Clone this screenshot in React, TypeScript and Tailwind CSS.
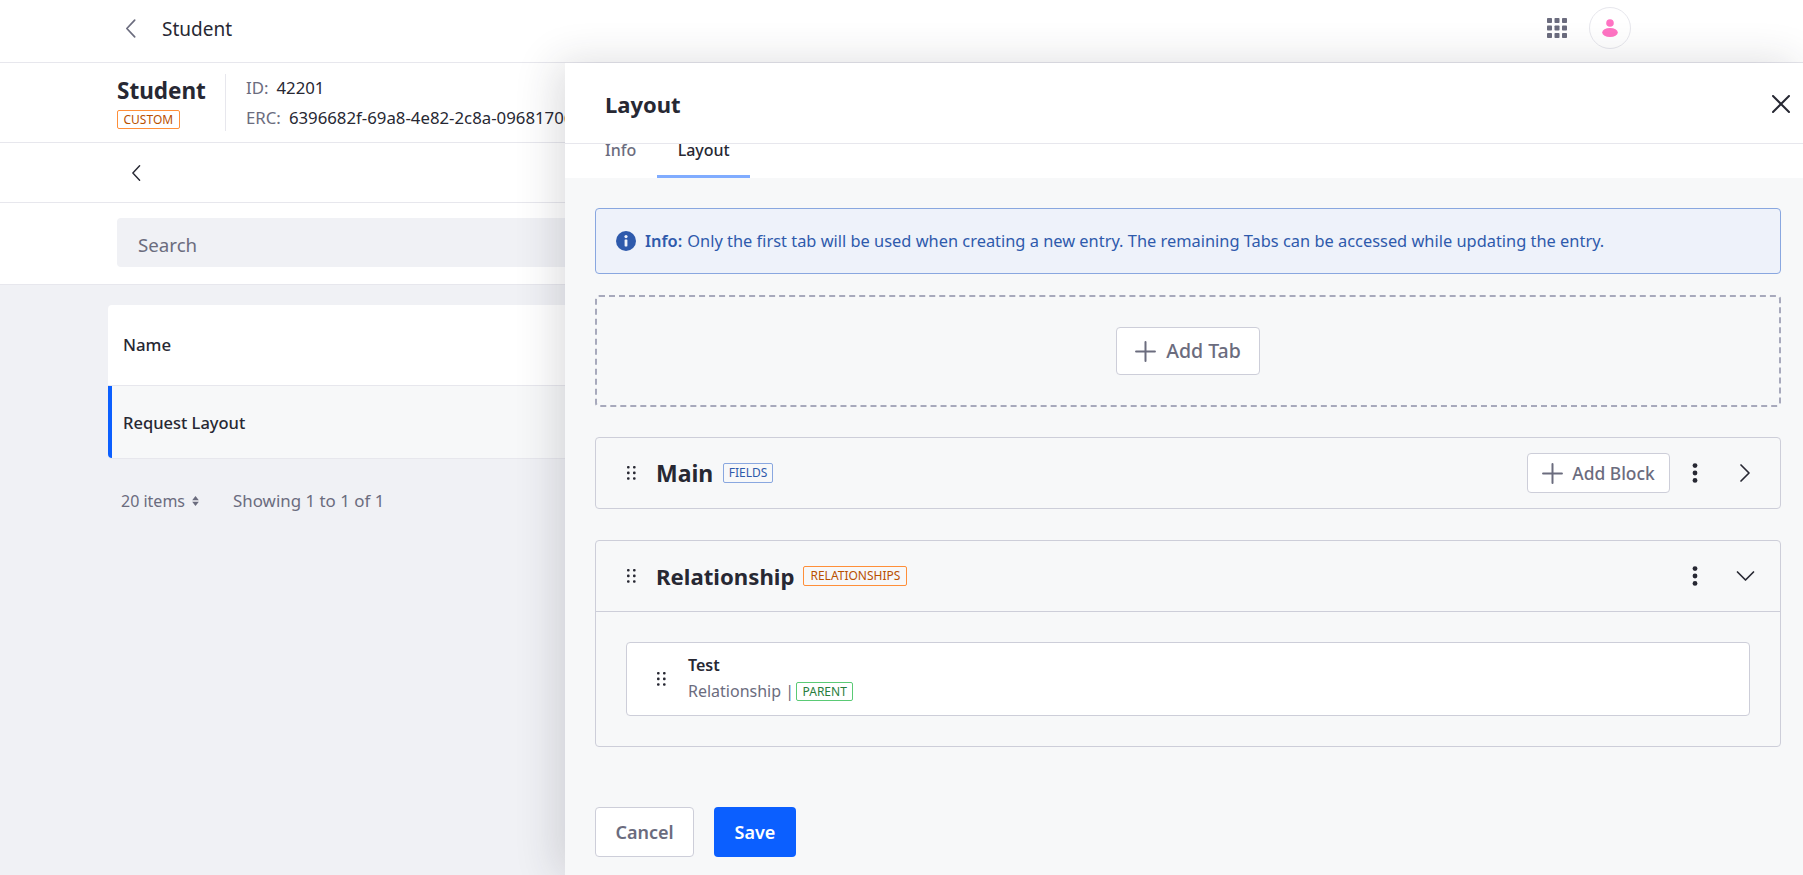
const font = "[font-family:'Noto_Sans','Open_Sans',sans-serif]";

function ChevronLeft({ className }: { className?: string }) {
  return (
    <svg viewBox="0 0 12 20" className={className} fill="none" stroke="currentColor" strokeWidth="1.6" strokeLinecap="round" strokeLinejoin="round">
      <path d="M10 2 2.5 10 10 18" />
    </svg>
  );
}

function Plus({ className }: { className?: string }) {
  return (
    <svg viewBox="0 0 20 20" className={className} fill="none" stroke="currentColor" strokeWidth="1.9" strokeLinecap="round">
      <path d="M10 1v18M1 10h18" />
    </svg>
  );
}

function Kebab() {
  return (
    <svg viewBox="0 0 6 20" className="w-[6px] h-[20px] text-[#272833]" fill="currentColor">
      <circle cx="3" cy="2.6" r="2.4" />
      <circle cx="3" cy="10" r="2.4" />
      <circle cx="3" cy="17.4" r="2.4" />
    </svg>
  );
}

function Handle() {
  return (
    <svg viewBox="0 0 9 14" className="w-[9px] h-[14px] text-[#272833]" fill="currentColor">
      <rect x="0" y="0" width="2.6" height="2.6" rx="1" />
      <rect x="6" y="0" width="2.6" height="2.6" rx="1" />
      <rect x="0" y="5.6" width="2.6" height="2.6" rx="1" />
      <rect x="6" y="5.6" width="2.6" height="2.6" rx="1" />
      <rect x="0" y="11.2" width="2.6" height="2.6" rx="1" />
      <rect x="6" y="11.2" width="2.6" height="2.6" rx="1" />
    </svg>
  );
}

function AppsGrid() {
  const cells = [0, 7.5, 15];
  return (
    <svg viewBox="0 0 20 20" className="w-5 h-5 text-[#6b6c7e]" fill="currentColor">
      {cells.map((y) =>
        cells.map((x) => <rect key={`${x}-${y}`} x={x} y={y} width="5" height="5" rx="0.8" />)
      )}
    </svg>
  );
}

export default function App() {
  return (
    <div className={`relative w-full h-[875px] overflow-hidden bg-[#f0f1f5] text-[#272833] ${font}`}>
      {/* page behind the side panel */}
      <div className="flex items-center justify-between h-[63px] bg-white border-b border-[#e7e7ed] pl-[124px] pr-[172px] pb-[6px]">
        <div className="flex items-center">
          <ChevronLeft className="w-[13px] h-[21px] text-[#6b6c7e]" />
          <span className="ml-[25px] pt-[3px] text-[19px]">Student</span>
        </div>
        <div className="flex items-center gap-[22px]">
          <AppsGrid />
          <div className="flex items-center justify-center w-[42px] h-[42px] rounded-full border border-[#e7e7ed] bg-white">
            <svg viewBox="0 0 16 18" className="w-[16px] h-[18px] text-[#ff73c3]" fill="currentColor">
              <circle cx="8" cy="4" r="3.8" />
              <ellipse cx="8" cy="13.5" rx="7.8" ry="4.5" />
            </svg>
          </div>
        </div>
      </div>

      <div className="flex items-center h-[80px] bg-white border-b border-[#e7e7ed] pl-[117px]">
        <div className="w-[108px]">
          <div className="text-[22.5px] leading-[30px] font-bold">Student</div>
          <span className="inline-block px-[5.5px] rounded-[2px] border border-[#ff8f39] text-[#b95000] text-[12px] leading-[17px]">CUSTOM</span>
        </div>
        <div className="w-px h-[57px] bg-[#e7e7ed]" />
        <div className="ml-[20px] text-[16.8px] leading-[30px] whitespace-nowrap">
          <div><span className="text-[#6b6c7e] mr-[8px]">ID:</span>42201</div>
          <div><span className="text-[#6b6c7e] mr-[8px]">ERC:</span>6396682f-69a8-4e82-2c8a-096817065f7a</div>
        </div>
      </div>

      <div className="flex items-center h-[60px] bg-white border-b border-[#e7e7ed] pl-[130px]">
        <ChevronLeft className="w-[12px] h-[18px] text-[#272833]" />
      </div>

      <div className="h-[82px] bg-white border-b border-[#e7e7ed] pl-[117px] pr-[117px] pt-[15px]">
        <div className="flex items-center h-[49px] rounded-[4px] bg-[#f0f1f5] px-[21px] pt-[5px] text-[18.7px] text-[#6b6c7e]">Search</div>
      </div>

      <div className="ml-[108px] mr-[40px] mt-[20px] rounded-[4px] bg-white shadow-[0_1px_0_#e7e7ed]">
        <div className="flex items-center h-[81px] pl-[15px] border-b border-[#e7e7ed] text-[16.8px] font-medium">Name</div>
        <div className="flex items-center h-[72px] pl-[11px] pt-[2px] border-l-4 border-[#0b5fff] rounded-bl-[4px] bg-[#f7f8f9] text-[16.5px] font-medium">Request Layout</div>
      </div>

      <div className="flex items-center pl-[121px] mt-[30px] text-[16px] text-[#6b6c7e]">
        <span>20 items</span>
        <svg viewBox="0 0 8 12" className="ml-[7px] w-[7px] h-[10px]" fill="currentColor">
          <path d="M4 0 8 5H0zM4 12 0 7h8z" />
        </svg>
        <span className="ml-[34px] text-[16.9px]">Showing 1 to 1 of 1</span>
      </div>

      {/* side panel */}
      <div className="absolute left-[565px] right-0 top-[63px] bottom-0 flex flex-col bg-[#f7f8f9] shadow-[-8px_0_40px_rgba(39,40,51,0.16)]">
        <div className="flex items-center justify-between shrink-0 h-[81px] bg-white border-b border-[#e7e7ed] pl-[40px] pr-[13px] pt-[1px]">
          <span className="pt-[1px] text-[22px] font-bold">Layout</span>
          <svg viewBox="0 0 18 18" className="w-[18px] h-[18px] text-[#272833]" fill="none" stroke="currentColor" strokeWidth="2" strokeLinecap="round">
            <path d="M1 1l16 16M17 1 1 17" />
          </svg>
        </div>
        <div className="flex shrink-0 h-[34px] bg-white pl-[40px] text-[16px] font-medium overflow-hidden">
          <span className="text-[#6b6c7e] -mt-[6px]">Info</span>
          <div className="ml-[21px] w-[93px] h-[34px] text-center border-b-[3px] border-[#80acff]">
            <span className="block -mt-[6px]">Layout</span>
          </div>
        </div>

        <div className="flex flex-col flex-1 pt-[30px] pl-[30px] pr-[22px]">
          <div className="flex items-center h-[66px] rounded-[4px] border border-[#89a7e0] bg-[#eef2fa] pl-[20px] text-[16.4px] text-[#2e5aac]">
            <svg viewBox="0 0 20 20" className="w-[20px] h-[20px] mr-[9px]">
              <circle cx="10" cy="10" r="10" fill="#2e5aac" />
              <rect x="8.6" y="8.4" width="2.8" height="7" rx="0.6" fill="#eef2fa" />
              <circle cx="10" cy="5.6" r="1.6" fill="#eef2fa" />
            </svg>
            <span className="font-semibold mr-[5px]">Info:</span>
            Only the first tab will be used when creating a new entry. The remaining Tabs can be accessed while updating the entry.
          </div>

          <div className="flex items-center justify-center h-[112px] mt-[21px] rounded-[4px] border-2 border-dashed border-[#a7a9bc]">
            <button className="flex items-center justify-center w-[144px] h-[48px] rounded-[4px] border border-[#cdced9] bg-white text-[19.5px] font-medium text-[#6b6c7e]">
              <Plus className="w-[21px] h-[21px] mr-[10px]" />
              Add Tab
            </button>
          </div>

          <div className="flex items-center h-[72px] mt-[30px] rounded-[4px] border border-[#cdced9] pl-[31px] pr-[29px]">
            <Handle />
            <span className="ml-[20px] pt-[1px] text-[23px] font-bold">Main</span>
            <span className="ml-[10px] px-[4.5px] rounded-[2px] border border-[#89a7e0] text-[#2e5aac] text-[12px] leading-[18px]">FIELDS</span>
            <button className="flex items-center justify-center ml-auto w-[143px] h-[40px] rounded-[4px] border border-[#cdced9] bg-white text-[17.4px] font-medium text-[#6b6c7e]">
              <Plus className="w-[21px] h-[21px] mr-[9px]" />
              Add Block
            </button>
            <div className="ml-[22px]"><Kebab /></div>
            <svg viewBox="0 0 12 20" className="ml-[41px] w-[12px] h-[20px] text-[#272833]" fill="none" stroke="currentColor" strokeWidth="1.7" strokeLinecap="round" strokeLinejoin="round">
              <path d="M2 2l8 8-8 8" />
            </svg>
          </div>

          <div className="mt-[31px] rounded-[4px] border border-[#cdced9]">
            <div className="flex items-center h-[71px] border-b border-[#cdced9] pl-[31px] pr-[24px]">
              <Handle />
              <span className="ml-[20px] pt-[1px] text-[22.2px] font-bold">Relationship</span>
              <span className="ml-[9px] px-[6px] rounded-[2px] border border-[#ff8f39] text-[#b95000] text-[12px] leading-[18px]">RELATIONSHIPS</span>
              <div className="ml-auto"><Kebab /></div>
              <svg viewBox="0 0 20 12" className="ml-[37px] w-[21px] h-[12px] text-[#272833]" fill="none" stroke="currentColor" strokeWidth="1.7" strokeLinecap="round" strokeLinejoin="round">
                <path d="M2 2l8 8 8-8" />
              </svg>
            </div>
            <div className="p-[30px]">
              <div className="flex items-center h-[74px] rounded-[4px] border border-[#cdced9] bg-white pl-[30px]">
                <Handle />
                <div className="ml-[22px]">
                  <div className="text-[16px] leading-[24px] font-semibold">Test</div>
                  <div className="flex items-center text-[16px] leading-[28px] text-[#6b6c7e]">
                    Relationship |
                    <span className="ml-[2px] px-[5.5px] rounded-[2px] border border-[#5aca75] text-[#287d3c] text-[12px] leading-[17px]">PARENT</span>
                  </div>
                </div>
              </div>
            </div>
          </div>

          <div className="flex gap-[20px] mt-[60px]">
            <button className="w-[99px] h-[50px] rounded-[4px] border border-[#cdced9] bg-white text-[18px] font-semibold text-[#6b6c7e]">Cancel</button>
            <button className="w-[82px] h-[50px] rounded-[4px] bg-[#0b5fff] text-[18px] font-semibold text-white">Save</button>
          </div>
        </div>
      </div>
    </div>
  );
}
